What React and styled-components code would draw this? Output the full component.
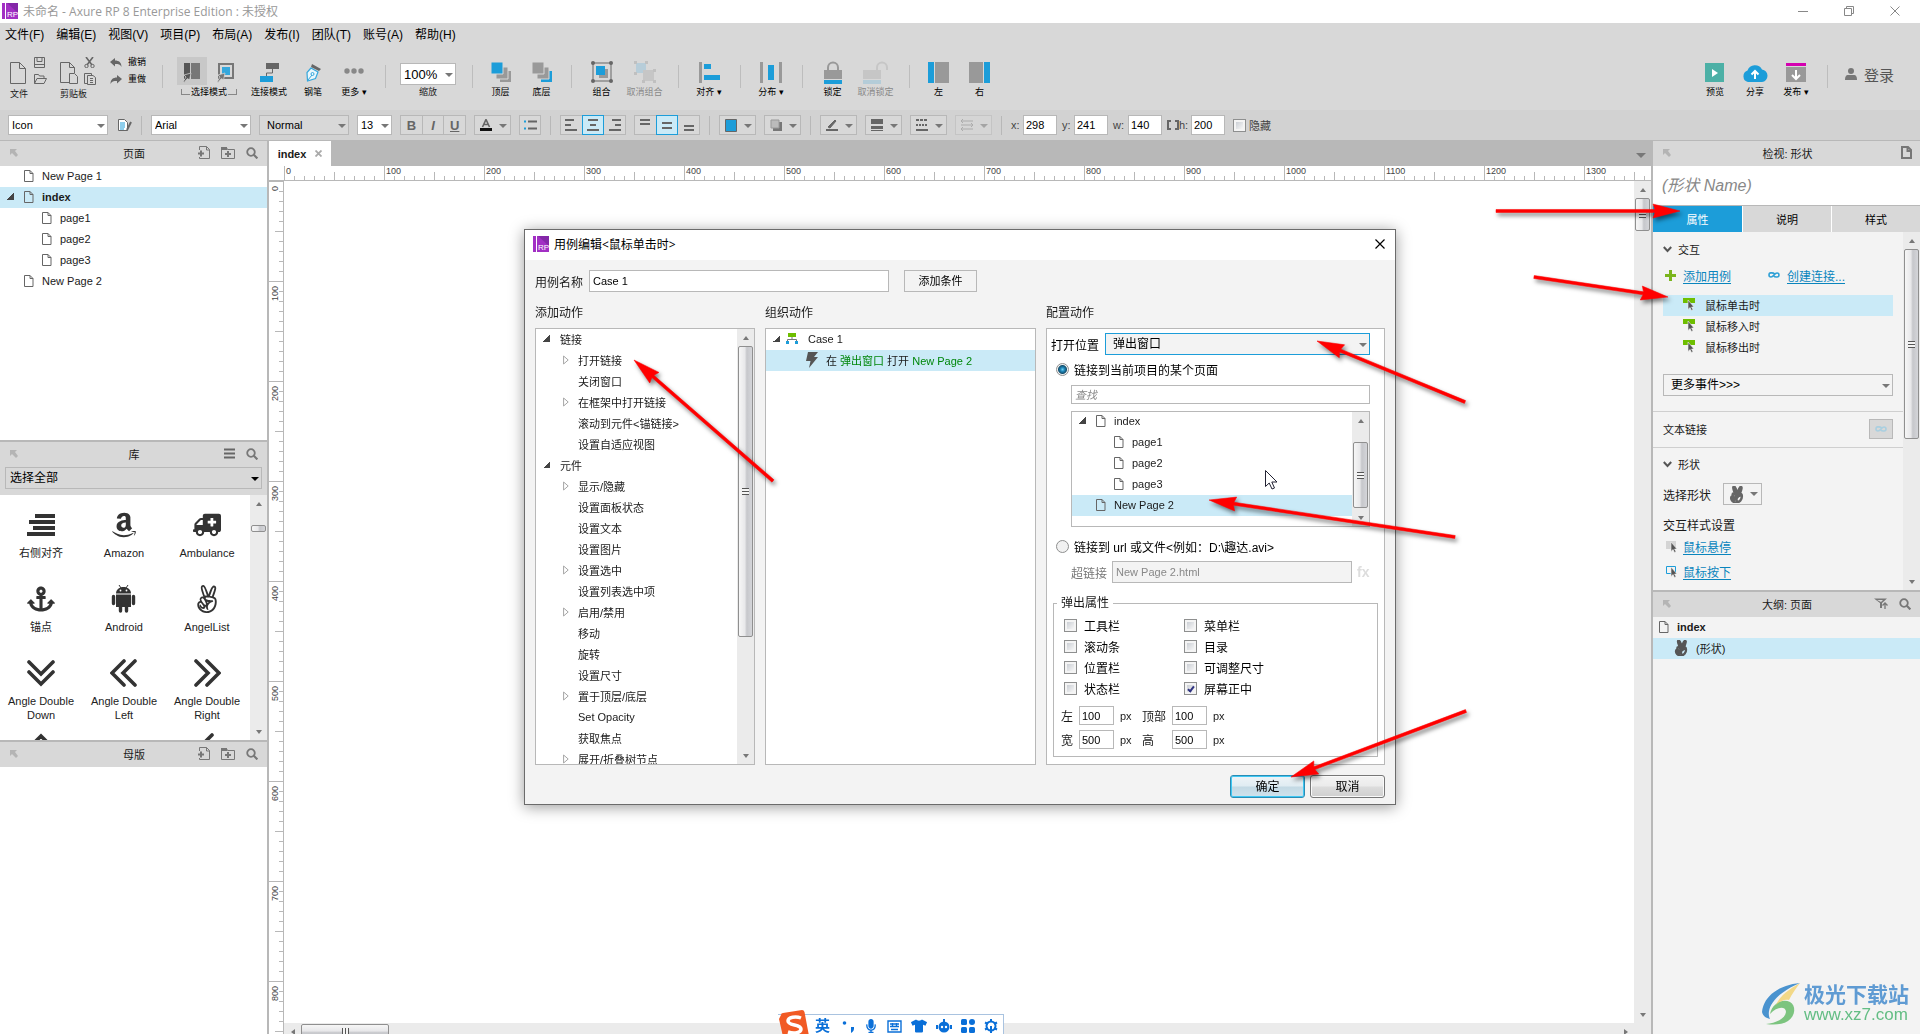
import React from "react";
import styled, { createGlobalStyle, css } from "styled-components";
import { FaAmazon, FaAmbulance, FaAnchor, FaAngellist, FaMicrophone, FaTshirt } from "react-icons/fa";

const C = {
  line: "#b8b8b8",
  bar: "#d8d8d8",
  bar2: "#d2d2d2",
  panel: "#f3f3f3",
  sel: "#caeaf7",
  blue: "#1c9dd9",
  link: "#0a85bd",
  green: "#6ebe00",
};
const SANS = '"Liberation Sans", "Noto Sans CJK SC", sans-serif';

const Global = createGlobalStyle`
  *, *::before, *::after { box-sizing: border-box; }
  body { margin: 0; background: #fff; overflow: hidden; }
  body, button, input, select { font-family: ${SANS}; font-size: 11px; color: #1a1a1a; }
  button { background: none; border: 0; padding: 0; }
  input, select { border-radius: 0; outline: none; margin: 0; }
  svg { display: block; flex: none; }
  ul { list-style: none; margin: 0; padding: 0; }
`;

/* ---------- shared parts ---------- */

const Page = styled.div`
  height: 100vh;
  display: flex;
  flex-direction: column;
`;
const Row = styled.div`
  display: flex;
  align-items: center;
`;
const Grow = styled.div`
  flex: 1;
  min-width: 0;
`;

const SelectWrap = styled.div`
  position: relative;
  width: ${(p) => p.$w || "100%"};
  flex: ${(p) => (p.$w ? "none" : "1")};
  &::after {
    content: "";
    position: absolute;
    right: 3px;
    top: calc(50% - 1px);
    border: 4px solid transparent;
    border-top-color: ${(p) => p.$arrow || "#777"};
    border-bottom: 0;
    pointer-events: none;
  }
`;
const SelectBox = styled.select`
  appearance: none;
  display: block;
  width: 100%;
  height: ${(p) => p.$h || 20}px;
  padding: 0 0 0 ${(p) => p.$pad || 3}px;
  font-size: ${(p) => p.$size || 11}px;
  color: #000;
  border: 1px solid ${(p) => p.$border || C.line};
  background: ${(p) => p.$bg || "#fff"};
`;
function Select({ w, label, value, arrow, ...rest }) {
  return (
    <SelectWrap $w={w} $arrow={arrow}>
      <SelectBox aria-label={label} defaultValue={value} {...rest}>
        <option>{value}</option>
      </SelectBox>
    </SelectWrap>
  );
}

const Bar = styled.div`
  width: 17px;
  flex: none;
  display: flex;
  flex-direction: column;
  align-items: center;
  background: #ebebeb;
  ${(p) => p.$horizontal && css`
    width: auto;
    height: 17px;
    padding-right: 17px;
    flex-direction: row;
  `}
`;
const BarArrow = styled.div`
  width: 17px;
  height: 17px;
  flex: none;
  display: grid;
  place-items: center;
  &::after {
    content: "";
    border: 3px solid transparent;
    border-bottom: 4px solid #777;
    border-top: 0;
    transform: rotate(${(p) => p.$turn || 0}deg);
  }
`;
const Thumb = styled.div`
  width: 15px;
  height: ${(p) => p.$h}px;
  margin-top: ${(p) => p.$at || 0}px;
  flex: none;
  border: 1px solid #8f8f8f;
  border-radius: 2px;
  display: grid;
  place-items: center;
  background: linear-gradient(90deg, #f6f6f6, #e8e8ea 45%, #c6c7cb 60%, #d4d5d9);
  &::after {
    content: "";
    width: 7px;
    height: ${(p) => (p.$h > 20 ? 7 : 0)}px;
    background: repeating-linear-gradient(#555 0 1px, #f4f4f4 1px 3px);
  }
  ${(p) => p.$horizontal && css`
    width: ${p.$h}px;
    height: 15px;
    margin: 0 0 0 ${p.$at || 0}px;
    background: linear-gradient(#f6f6f6, #e8e8ea 45%, #c6c7cb 60%, #d4d5d9);
    &::after {
      width: 7px;
      height: 7px;
      background: repeating-linear-gradient(90deg, #555 0 1px, #f4f4f4 1px 3px);
    }
  `}
`;
function Scrollbar({ at, size }) {
  return (
    <Bar>
      <BarArrow />
      <Thumb $at={at} $h={size} />
      <Grow />
      <BarArrow $turn={180} />
    </Bar>
  );
}

const Check = styled.input.attrs({ type: "checkbox" })`
  appearance: none;
  flex: none;
  width: 13px;
  height: 13px;
  border: 1px solid #8e8f8f;
  background: linear-gradient(135deg, #cbcfd5, #f6f6f6) content-box, #f4f4f4;
  padding: 2px;
  display: grid;
  place-items: center;
  &:checked::after {
    content: "";
    width: 4px;
    height: 7px;
    border: solid #2f3380;
    border-width: 0 2px 2px 0;
    transform: rotate(38deg);
  }
`;
const Radio = styled.input.attrs({ type: "radio" })`
  appearance: none;
  flex: none;
  width: 13px;
  height: 13px;
  border-radius: 50%;
  border: 1px solid #8e8f8f;
  background: #f1f1f1;
  &:checked {
    background: radial-gradient(circle at 50% 50%, #6fd0f2 0, #1f86b8 2px, #15506f 4px, #f1f1f1 5px);
  }
`;

/* ---------- icons ---------- */

const I = ({ w, h, children, ...rest }) => (
  <svg width={w} height={h} viewBox={`0 0 ${w} ${h}`} fill="none" aria-hidden="true" {...rest}>{children}</svg>
);
const Logo = () => (
  <I w={16} h={16}>
    <path d="M0 0h16v16H0z" fill="#a22fc4" />
    <path d="M5 0h11v10z" fill="#8427a8" />
    <path d="M3.500 0v16" stroke="#fff" />
    <text x="5" y="14" fontSize="8" fill="#fff" fontFamily="Liberation Sans">RP</text>
  </I>
);
const PageIcon = () => (
  <I w={10} h={12}>
    <path d="M.5.5h5.500l3 3v8H.5zM6 .5v3h3" stroke="#666" />
  </I>
);
const PinIcon = () => (
  <I w={8} h={8}>
    <path d="M0 0h7L5 2l3 4-2 2-4-4-2 2z" fill="#b4b4b4" />
  </I>
);
const SearchIcon = () => (
  <I w={12} h={12}>
    <circle cx="5" cy="5" r="3.800" stroke="#777" strokeWidth="1.800" />
    <path d="M7.800 7.800l3.600 3.600" stroke="#777" strokeWidth="2.200" />
  </I>
);
const AddPageIcon = () => (
  <I w={12} h={13}>
    <path d="M1.500 4V.5h7l3 3v9h-10V11M8.500.5V4h3" stroke="#777" />
    <path d="M0 7.500h6M3 4.500v6" stroke="#777" strokeWidth="2" />
  </I>
);
const AddFolderIcon = () => (
  <I w={14} h={12}>
    <path d="M.5 11.500v-11h5l1 2h7v9z" stroke="#777" />
    <path d="M0 0h6v3H0z" fill="#777" />
    <path d="M4 7h6M7 4v6" stroke="#777" strokeWidth="2" />
  </I>
);
const MenuIcon = () => (
  <I w={11} h={11}><path d="M0 1.500h11M0 5.500h11M0 9.500h11" stroke="#666" strokeWidth="2" /></I>
);
const FilterIcon = () => (
  <I w={14} h={11}>
    <path d="M0 .5h13L8 5v5H6V5z" fill="#777" />
    <path d="M3 2h6L7 4z" fill="#d8d8d8" />
    <path d="M11 11V5M8.500 7.500L11 5l2.500 2.500" stroke="#777" strokeWidth="1.300" />
  </I>
);
const PointerIcon = ({ kind }) => (
  <I w={12} h={13}>
    {kind === "event" && <path d="M0 0h12v5H0z" fill={C.green} />}
    {kind === "hover" && <path d="M0 1h10v8H0z" fill="#d4d4d4" />}
    {kind === "press" && <path d="M.5 1.500h9v7h-9z" stroke={C.blue} />}
    <path d="M5 2v9.500l2-2 1.500 3 1.500-.8L8.600 9H11z" fill="#555" stroke="#f3f3f3" strokeWidth=".6" />
  </I>
);
const ChainIcon = ({ color = "#2fa0d6" }) => (
  <I w={12} h={6}>
    <path d="M6.500 1.800C5.600.8 4 .8 2.800.9 1.600 1 1 2 1 3s.8 2 2 2c2.500 0 3.500-4 6-4 1.200 0 2 1 2 2s-.8 2-2 2C7.800 5.100 6.500 5 5.800 4" stroke={color} strokeWidth="1.600" />
  </I>
);
const Chevron = () => (
  <I w={9} h={7}><path d="M.8 1l3.700 4L8.200 1" stroke="#555" strokeWidth="2" /></I>
);

const fileIcon = <I w={16} h={22}><path d="M.5.5h9l6 6v15H.5zM9.500.5v6h6" stroke="#666" /></I>;
const saveIcon = <I w={11} h={11}><path d="M.5.500h10v10H.5zM3 .5v4h5v-4M0 7.500h11" stroke="#666" /></I>;
const openIcon = <I w={13} h={10}><path d="M.5 9.500V.5h4l1 1.500H10v2.500H3l-2.500 5H10l2.500-5H10" stroke="#666" /></I>;
const cutIcon = <I w={11} h={11}><path d="M2 0l6 8M9 0L3 8" stroke="#666" strokeWidth="1.600" /><circle cx="2.500" cy="9" r="1.700" stroke="#666" /><circle cx="8.500" cy="9" r="1.700" stroke="#666" /></I>;
const clipIcon = <I w={18} h={22}><path d="M9 20.500H.5V.5h9l5 5V11M9.500.5v5h5" stroke="#666" /><path d="M9.500 11.500h5l3 3v7h-8z" stroke="#666" /></I>;
const pasteIcon = <I w={12} h={12}><path d="M3 10.500H.5V.5h7V2" stroke="#666" /><path d="M3.500 2.500h5.500l2.500 2v7h-8zM6 5.500h3M6 7.500h3M6 9.500h3" stroke="#666" /></I>;
const undoIcon = <I w={12} h={10}><path d="M0 4l5-4v2.500c4 0 6.500 2 6.500 6.500C10.500 6.500 8.500 6 5 6v2.500z" fill="#666" /></I>;
const redoIcon = <I w={12} h={10}><path d="M12 4L7 0v2.500C3 2.500.5 4.500.5 9 1.500 6.500 3.500 6 7 6v2.500z" fill="#666" /></I>;
const modeA = <I w={17} h={20}><path d="M1 0h6v16H1z" fill="#555" /><path d="M8 0h9v16H8z" fill="#777" /><path d="M0 19l3-5-2-2 7-2-1.500 7-2-1.500-3.500 4z" fill="#555" stroke="#ddd" strokeWidth=".7" /></I>;
const modeB = <I w={17} h={20}><path d="M2 1h14v14H2z" stroke="#777" strokeWidth="2" fill="#d8d8d8" /><path d="M5 4h8v8H5z" fill="#35a7dc" /><path d="M0 19l3-5-2-2 7-2-1.500 7-2-1.500-3.500 4z" fill="#777" stroke="#ddd" strokeWidth=".7" /></I>;
const connectIcon = <I w={19} h={19}><path d="M6 0h13v6H6z" fill="#666" /><path d="M12.500 6v4h-6v3" stroke="#666" /><path d="M0 13h13v6H0z" fill={C.blue} /></I>;
const penIcon = <I w={15} h={19}><path d="M6 1l9 5-2 2-8-4z" fill="#666" /><path d="M5 5L1 9.500 1.500 18l8-2.500L12 9z" fill="#eaf7fc" stroke="#35a7dc" strokeWidth="1.200" /><path d="M2 17l4-5" stroke="#35a7dc" /><circle cx="6.500" cy="11" r="1.500" stroke="#35a7dc" /></I>;
const moreIcon = <I w={20} h={22}><g fill="#888"><circle cx="3" cy="10" r="2.700" /><circle cx="10" cy="10" r="2.700" /><circle cx="17" cy="10" r="2.700" /></g></I>;
const frontIcon = <I w={20} h={20}><path d="M9 9h11v11H9z" fill="#999" /><path d="M5 5h12v12H5z" fill="#999" stroke="#d8d8d8" /><path d="M0 0h12v12H0z" fill={C.blue} stroke="#d8d8d8" /></I>;
const backIcon = <I w={20} h={20}><path d="M9 9h11v11H9z" fill={C.blue} /><path d="M5 5h12v12H5z" fill="#999" stroke="#d8d8d8" /><path d="M0 0h12v12H0z" fill="#999" stroke="#d8d8d8" /></I>;
const groupIcon = <I w={22} h={22}><path d="M2 2h18v18H2z" stroke="#666" /><g fill="#666"><circle cx="2" cy="2" r="2" /><circle cx="20" cy="2" r="2" /><circle cx="2" cy="20" r="2" /><circle cx="20" cy="20" r="2" /></g><path d="M8 8h9v9H8z" fill="#999" /><path d="M5 5h9v9H5z" fill={C.blue} /></I>;
const ungroupIcon = <I w={22} h={22}><path d="M2 2h10v10H2z" fill="#b7cdd9" /><path d="M9 9h11v11H9z" fill="#c6c6c6" /><g fill="#c0c0c0"><path d="M0 0h3v3H0zM11 0h3v3h-3zM0 11h3v3H0zM19 8h3v3h-3zM8 19h3v3H8zM19 19h3v3h-3z" /></g></I>;
const alignIcon = <I w={21} h={21}><path d="M0 0h3v21H0z" fill="#999" /><path d="M5 2h7v5H5zM5 13h16v5H5z" fill={C.blue} /></I>;
const distIcon = <I w={22} h={21}><path d="M0 0h3v21H0zM19 0h3v21h-3z" fill="#999" /><path d="M8 3h6v15H8z" fill={C.blue} /></I>;
const lockIcon = <I w={18} h={23}><path d="M4 9V6.500a5 5 0 0110 0V9" stroke="#999" strokeWidth="2" /><path d="M0 9h18v9H0z" fill="#999" /><path d="M0 19h18v4H0z" fill={C.blue} /></I>;
const unlockIcon = <I w={26} h={23}><path d="M14 9V6.500a5 5 0 0110 0V9" stroke="#c6c6c6" strokeWidth="2" /><path d="M0 9h18v9H0z" fill="#c6c6c6" /><path d="M0 19h18v4H0z" fill="#b4ccd8" /></I>;
const leftIcon = <I w={21} h={21}><path d="M0 0h6v21H0z" fill={C.blue} /><path d="M7 0h14v21H7z" fill="#999" /></I>;
const rightIcon = <I w={21} h={21}><path d="M15 0h6v21h-6z" fill={C.blue} /><path d="M0 0h14v21H0z" fill="#999" /></I>;
const previewIcon = <I w={19} h={19}><path d="M0 0h19v19H0z" fill="#4cb0a6" /><path d="M7 6l6 4-6 4z" fill="#fff" /></I>;
const shareIcon = <I w={26} h={19}><path d="M6 19a6 6 0 01-.5-11.500 8 8 0 0114.500-1A6.300 6.300 0 0120 19z" fill={C.blue} /><path d="M13 16V8.500M9.500 11.500L13 8l3.500 3.500" stroke="#fff" strokeWidth="2" /></I>;
const publishIcon = <I w={20} h={19}><path d="M0 0h20v3H0z" fill="#d400b0" /><path d="M0 4h20v15H0z" fill="#999" /><path d="M10 7v9M6 12l4 4 4-4" stroke="#fff" strokeWidth="2" /></I>;
const userIcon = <I w={12} h={12}><circle cx="6" cy="3" r="3" fill="#777" /><path d="M0 12c0-4 1.500-5 3-5h6c1.500 0 3 1 3 5z" fill="#777" /></I>;

/* ---------- window title and menu ---------- */

const TitleBar = styled.header`
  height: 23px;
  flex: none;
  display: flex;
  align-items: center;
  gap: 5px;
  padding: 0 20px 1px 2px;
  color: #999;
  font: 12px "Open Sans", "Noto Sans CJK SC", sans-serif;
`;
const WinButtons = styled.div`
  display: flex;
  gap: 36px;
  margin-left: auto;
  button { width: 10px; height: 10px; }
`;
const Menu = styled.nav`
  height: 24px;
  flex: none;
  display: flex;
  align-items: center;
  gap: 12px;
  padding: 0 0 3px 5px;
  background: ${C.bar};
  button { font-size: 12px; color: #000; }
`;

/* ---------- toolbar ---------- */

const ToolbarBox = styled.div`
  height: 63px;
  flex: none;
  display: flex;
  align-items: flex-start;
  padding: 7px 26px 0 10px;
  background: ${C.bar};
`;
const Tool = styled.button`
  width: ${(p) => p.$w}px;
  flex: none;
  display: flex;
  flex-direction: column;
  align-items: center;
  font-size: 9px;
  line-height: 14px;
  white-space: nowrap;
  color: ${(p) => (p.$off ? "#888" : "#000")};
`;
const ToolIcon = styled.span`
  height: 31px;
  display: flex;
  align-items: center;
  padding-top: 5px;
`;
const ToolSep = styled.div`
  width: 1px;
  height: 23px;
  flex: none;
  margin: 11px ${(p) => p.$r || 8}px 0 ${(p) => p.$l || 9}px;
  background: #bdbdbd;
`;
const FileTools = styled.div`
  width: 50px;
  flex: none;
  display: grid;
  grid-template-columns: 24px auto;
  grid-template-rows: 16px 18px 12px;
  align-items: center;
  justify-content: start;
  font-size: 9px;
  line-height: 12px;
  & > :first-child { grid-row: span 2; padding-top: 4px; }
  & > :last-child { grid-column: span 2; }
`;
const UndoTools = styled.div`
  width: 51px;
  flex: none;
  display: flex;
  flex-direction: column;
  align-items: flex-start;
  button { display: flex; align-items: center; gap: 6px; font-size: 9px; height: 17px; line-height: 17px; color: #000; }
`;
const ModeGroup = styled.div`
  width: 84px;
  flex: none;
  padding-top: 3px;
  display: grid;
  grid-template-columns: 30px 30px;
  column-gap: 4px;
  justify-content: center;
`;
const ModeButton = styled.button`
  height: 28px;
  display: grid;
  place-items: center;
  padding: 4px 2px 0 0;
  background: ${(p) => (p.$on ? "#c8c8c8" : "none")};
`;
const ModeLabel = styled.div`
  grid-column: span 2;
  display: flex;
  align-items: center;
  justify-content: center;
  font-size: 9px;
  line-height: 14px;
  color: #000;
  gap: 1px;
  &::before, &::after { content: ""; width: 9px; height: 6px; border: solid #888; border-width: 0 0 1px 1px; }
  &::after { border-width: 0 1px 1px 0; }
`;
const ZoomBox = styled.div`
  width: 56px;
  padding-top: 9px;
  display: flex;
  flex-direction: column;
  flex: none;
  text-align: center;
  font-size: 9px;
  line-height: 14px;
`;
const User = styled.button`
  display: flex;
  align-items: center;
  gap: 7px;
  height: 40px;
  font-size: 15px;
  color: #555;
`;

function T({ w, icon, off, children }) {
  return <Tool $w={w} $off={off}><ToolIcon>{icon}</ToolIcon>{children}</Tool>;
}

function Toolbar() {
  return (
    <ToolbarBox>
      <FileTools><span>{fileIcon}</span>{saveIcon}{openIcon}<span>文件</span></FileTools>
      <FileTools><span>{clipIcon}</span>{cutIcon}{pasteIcon}<span>剪贴板</span></FileTools>
      <UndoTools><button>{undoIcon}撤销</button><button>{redoIcon}重做</button></UndoTools>
      <ToolSep $l={1} $r={4} />
      <ModeGroup>
        <ModeButton $on aria-label="相交选中">{modeA}</ModeButton>
        <ModeButton aria-label="包含选中">{modeB}</ModeButton>
        <ModeLabel>选择模式</ModeLabel>
      </ModeGroup>
      <T w={36} icon={connectIcon}>连接模式</T>
      <T w={52} icon={penIcon}>钢笔</T>
      <T w={30} icon={moreIcon}>更多 ▾</T>
      <ToolSep $l={16} $r={14} />
      <ZoomBox>
        <Row><Select label="缩放" value="100%" $h={22} $size={13} w="56px" /></Row>
        缩放
      </ZoomBox>
      <ToolSep $l={16} $r={7} />
      <T w={41} icon={frontIcon}>顶层</T>
      <T w={41} icon={backIcon}>底层</T>
      <ToolSep />
      <T w={43} icon={groupIcon}>组合</T>
      <T w={43} icon={ungroupIcon} off>取消组合</T>
      <ToolSep $l={12} />
      <T w={44} icon={alignIcon}>对齐 ▾</T>
      <ToolSep />
      <T w={44} icon={distIcon}>分布 ▾</T>
      <ToolSep />
      <T w={43} icon={lockIcon}>锁定</T>
      <T w={43} icon={unlockIcon} off>取消锁定</T>
      <ToolSep $l={12} />
      <T w={41} icon={leftIcon}>左</T>
      <T w={41} icon={rightIcon}>右</T>
      <Grow />
      <T w={40} icon={previewIcon}>预览</T>
      <T w={40} icon={shareIcon}>分享</T>
      <T w={42} icon={publishIcon}>发布 ▾</T>
      <ToolSep $l={10} $r={17} />
      <User>{userIcon}登录</User>
    </ToolbarBox>
  );
}

/* ---------- format bar ---------- */

const FormatBox = styled.div`
  height: 31px;
  flex: none;
  display: flex;
  align-items: center;
  gap: 8px;
  padding-left: 8px;
  background: ${C.bar2};
  border-bottom: 1px solid ${C.line};
`;
const Sep = styled.div`
  width: 1px;
  height: 19px;
  margin: 0 1px;
  background: ${C.line};
`;
const StyleButton = styled.button`
  padding: 0 0 0 2px;
`;
const Cells = styled.div`
  width: 66px;
  display: flex;
  button { flex: 1; }
  button + button { margin-left: -1px; }
`;
const Cell = styled.button`
  width: ${(p) => (p.$drop ? 37 : 22)}px;
  height: 20px;
  display: flex;
  align-items: center;
  justify-content: ${(p) => (p.$drop ? "space-between" : "center")};
  padding: ${(p) => (p.$drop ? "0 3px 0 5px" : 0)};
  border: 1px solid ${(p) => (p.$on ? C.blue : C.line)};
  background: ${(p) => (p.$on ? C.sel : C.bar)};
  z-index: ${(p) => (p.$on ? 1 : 0)};
  opacity: ${(p) => (p.$off ? 0.5 : 1)};
  color: #666;
  font-size: 13px;
  font-weight: bold;
  ${(p) => p.$drop && css`
    &::after { content: ""; border: 4px solid transparent; border-top-color: #777; border-bottom: 0; margin-top: 1px; }
  `}
`;
const Fields = styled.div`
  display: flex;
  align-items: center;
  gap: 5px;
`;
const Field = styled.label`
  display: flex;
  align-items: center;
  gap: 3px;
  font-size: 11px;
  color: #444;
  span { width: ${(p) => p.$w || 9}px; }
`;
const NumInput = styled.input`
  width: ${(p) => p.$w || 34}px;
  height: ${(p) => p.$h || 20}px;
  padding: 0 2px;
  border: 1px solid ${C.line};
  background: #fff;
  color: #000;
`;
const lines = (d, w = 12, h = 12) => <I w={w} h={h}><path d={d} stroke="#666" strokeWidth="2" /></I>;

function FormatBar() {
  return (
    <FormatBox>
      <Select w="100px" label="样式" value="Icon" />
      <StyleButton aria-label="样式管理">
        <I w={14} h={12}>
          <path d="M.5.5h6l3 3v8h-9z" fill="#fff" stroke="#666" />
          <path d="M2 4h5M2 6h5M2 8h5M2 10h4" stroke={C.blue} />
          <path d="M13 3l-4 8" stroke="#666" strokeWidth="2" />
        </I>
      </StyleButton>
      <Sep />
      <Select w="100px" label="字体" value="Arial" />
      <Select w="90px" label="字形" value="Normal" $bg={C.bar} $pad={7} />
      <Select w="35px" label="字号" value="13" />
      <Cells><Cell>B</Cell><Cell><i>I</i></Cell><Cell><u>U</u></Cell></Cells>
      <Cell $drop aria-label="文字颜色">
        <I w={12} h={12}><path d="M2.500 8L6 0.500 9.500 8M4 5.500h4" stroke="#666" strokeWidth="1.600" /><path d="M0 9h12v3H0z" fill="#111" /></I>
      </Cell>
      <Cell aria-label="项目符号">
        <I w={13} h={10}><path d="M0 1.500h2M0 8.500h2" stroke={C.blue} strokeWidth="2" /><path d="M4 1.500h9M4 8.500h9" stroke="#666" strokeWidth="2" /></I>
      </Cell>
      <Sep />
      <Cells>
        <Cell aria-label="左对齐">{lines("M0 1h9M0 6h6M0 11h12")}</Cell>
        <Cell $on aria-label="居中">{lines("M1 1h10M3 6h6M0 11h12")}</Cell>
        <Cell aria-label="右对齐">{lines("M3 1h9M6 6h6M0 11h12")}</Cell>
      </Cells>
      <Cells>
        <Cell aria-label="顶部">{lines("M1 1h10M1 5h10")}</Cell>
        <Cell $on aria-label="中部">{lines("M1 4h10M1 9h10")}</Cell>
        <Cell aria-label="底部">{lines("M1 7h10M1 11h10")}</Cell>
      </Cells>
      <Sep />
      <Cell $drop aria-label="填充"><I w={12} h={13}><path d="M.5.5h11v12H.5z" fill={C.blue} stroke="#666" /></I></Cell>
      <Cell $drop aria-label="阴影"><I w={12} h={12}><path d="M3 3h9v9H3z" fill="#777" /><path d="M1 1h8v8H1z" fill="#bbb" stroke="#999" /></I></Cell>
      <Sep />
      <Cell $drop aria-label="线条颜色"><I w={12} h={12}><path d="M2 8l7-7 1 1-6 7z" fill="#666" stroke="#666" /><path d="M0 11h12" stroke="#666" strokeWidth="2" /></I></Cell>
      <Cell $drop aria-label="线宽"><I w={12} h={12}><path d="M0 0h12v5H0zM0 7h12v3H0zM0 11h12v1H0z" fill="#666" /></I></Cell>
      <Cell $drop aria-label="线型"><I w={12} h={12}><path d="M0 1h12" stroke="#666" strokeWidth="2" strokeDasharray="3 1" /><path d="M0 6h12" stroke="#666" strokeWidth="2" strokeDasharray="2 1" /><path d="M0 11h12" stroke="#666" strokeWidth="2" /></I></Cell>
      <Cell $drop $off aria-label="箭头"><I w={12} h={12}><path d="M0 2h12M0 6h12M0 10h12M2 0L0 2l2 2M10 4l2 2-2 2M2 8l-2 2 2 2" stroke="#888" /></I></Cell>
      <Sep />
      <Fields>
        <Field><span>x:</span><NumInput defaultValue="298" /></Field>
        <Field><span>y:</span><NumInput defaultValue="241" /></Field>
        <Field $w={12}><span>w:</span><NumInput defaultValue="140" /></Field>
        <Row>
          <I w={12} h={10}><path d="M4 1H1v8h3M8 1h3v8H8" stroke="#666" strokeWidth="2" /></I>
          <Field><span>h:</span><NumInput defaultValue="200" /></Field>
        </Row>
      </Fields>
      <Field><Check />隐藏</Field>
    </FormatBox>
  );
}

/* ---------- side panels ---------- */

const Main = styled.div`
  flex: 1;
  min-height: 0;
  display: grid;
  grid-template-columns: 269px minmax(0, 1fr) 269px;
`;
const Side = styled.aside`
  min-height: 0;
  display: flex;
  flex-direction: column;
  background: ${(p) => (p.$right ? C.panel : "#fff")};
  border: solid ${C.line};
  border-width: ${(p) => (p.$right ? "0 0 0 2px" : "0 2px 0 0")};
`;
const HeadBox = styled.div`
  height: 25px;
  flex: none;
  display: grid;
  grid-template-columns: 1fr auto 1fr;
  align-items: center;
  padding: 0 ${(p) => p.$r || 9}px 2px 10px;
  background: ${C.bar};
  font-size: 11px;
`;
const HeadIcons = styled.div`
  display: flex;
  align-items: center;
  justify-content: flex-end;
  gap: 11px;
`;
function Head({ title, children, r }) {
  return <HeadBox $r={r}><PinIcon /><span>{title}</span><HeadIcons>{children}</HeadIcons></HeadBox>;
}
const Block = styled.section`
  display: flex;
  flex-direction: column;
  flex: ${(p) => (p.$h ? "none" : "1")};
  height: ${(p) => (p.$h ? `${p.$h}px` : "auto")};
  min-height: 0;
  overflow: hidden;
  border-bottom: ${(p) => (p.$h ? 2 : 0)}px solid ${C.line};
`;
const Item = styled.li`
  height: 21px;
  display: flex;
  align-items: center;
  gap: ${(p) => p.$gap || 8}px;
  padding: 0 0 2px ${(p) => p.$in}px;
  white-space: nowrap;
  font-weight: ${(p) => (p.$bold ? "bold" : "normal")};
  background: ${(p) => (p.$on ? C.sel : "none")};
`;
const Twist = styled.i`
  width: 7px;
  height: 7px;
  flex: none;
  margin-right: ${(p) => p.$r || 0}px;
  background: linear-gradient(135deg, transparent 50%, #444 50%);
`;
const LibHead = styled.div`
  padding: 0 5px 6px;
  background: ${C.bar};
  display: flex;
`;
const LibBody = styled.div`
  flex: 1;
  min-height: 0;
  display: flex;
`;
const LibGrid = styled.div`
  flex: 1;
  display: grid;
  grid-template-columns: repeat(3, 83px);
  grid-auto-rows: 74px;
  overflow: hidden;
`;
const LibItem = styled.div`
  display: flex;
  flex-direction: column;
  align-items: center;
  text-align: center;
  padding: 16px 4px 0 3px;
  line-height: 14px;
  color: #222;
  svg { margin-bottom: 7px; }
`;
const Flip = styled.span`
  svg { transform: scaleX(-1); }
`;

const K = "#333";
const libIcons = [
  [<I w={28} h={28}><path d="M8 3h20v4H8zM2 9h26v4H2zM6 15h22v4H6zM0 21h28v4H0z" fill={K} /></I>, "右侧对齐"],
  [<FaAmazon size={28} color={K} />, "Amazon"],
  [<Flip><FaAmbulance size={28} color={K} /></Flip>, "Ambulance"],
  [<FaAnchor size={28} color={K} />, "锚点"],
  [<I w={28} h={28} fill={K}>
    <path d="M6 8.500C6 4.500 9.500 2 13.500 2S21 4.500 21 8.500z" fill={K} />
    <path d="M9 0l2 3M18 0l-2 3" stroke={K} />
    <circle cx="10.500" cy="5.500" r=".9" fill="#fff" /><circle cx="16.500" cy="5.500" r=".9" fill="#fff" />
    <path d="M6 9.500h15V22H6z" fill={K} />
    <path d="M3.500 11.500v7M23.500 11.500v7M10.500 20v6M16.500 20v6" stroke={K} strokeWidth="3.400" strokeLinecap="round" />
  </I>, "Android"],
  [<FaAngellist size={28} color={K} />, "AngelList"],
  [<I w={28} h={28}><path d="M2 3l12 12L26 3M2 13l12 12 12-12" stroke={K} strokeWidth="3.600" strokeLinecap="round" /></I>, "Angle Double Down"],
  [<I w={28} h={28}><path d="M14 2L2 14l12 12M25 2L13 14l12 12" stroke={K} strokeWidth="3.600" strokeLinecap="round" /></I>, "Angle Double Left"],
  [<I w={28} h={28}><path d="M3 2l12 12L3 26M14 2l12 12-12 12" stroke={K} strokeWidth="3.600" strokeLinecap="round" /></I>, "Angle Double Right"],
  [<I w={28} h={28}><path d="M2 15L14 3l12 12M2 25l12-12 12 12" stroke={K} strokeWidth="3.600" strokeLinecap="round" /></I>, ""],
  [<I w={28} h={28}><path d="M2 12l12 12 12-12" stroke={K} strokeWidth="3.600" strokeLinecap="round" /></I>, ""],
  [<I w={28} h={28}><path d="M19 2L7 14l12 12" stroke={K} strokeWidth="3.600" strokeLinecap="round" /></I>, ""],
];

function LeftPanel() {
  return (
    <Side>
      <Block $h={301}>
        <Head title="页面"><AddPageIcon /><AddFolderIcon /><SearchIcon /></Head>
        <ul>
          <Item $in={24}><PageIcon />New Page 1</Item>
          <Item $in={7} $on $bold><Twist $r={2} /><PageIcon />index</Item>
          <Item $in={42}><PageIcon />page1</Item>
          <Item $in={42}><PageIcon />page2</Item>
          <Item $in={42}><PageIcon />page3</Item>
          <Item $in={24}><PageIcon />New Page 2</Item>
        </ul>
      </Block>
      <Block $h={300}>
        <Head title="库"><MenuIcon /><SearchIcon /></Head>
        <LibHead><Select label="库" value="选择全部" $h={22} $size={12} $pad={4} $bg={C.bar} arrow="#000" /></LibHead>
        <LibBody>
          <LibGrid>{libIcons.map(([icon, name], i) => <LibItem key={i}>{icon}{name}</LibItem>)}</LibGrid>
          <Scrollbar at={13} size={7} />
        </LibBody>
      </Block>
      <Block>
        <Head title="母版"><AddPageIcon /><AddFolderIcon /><SearchIcon /></Head>
      </Block>
    </Side>
  );
}

const NameInput = styled.input`
  height: 40px;
  flex: none;
  padding: 0 9px;
  border: solid ${C.line};
  border-width: 0 0 1px;
  font-size: 16px;
  font-style: italic;
  &::placeholder { color: #888; opacity: 1; }
`;
const Tabs = styled.div`
  display: grid;
  grid-template-columns: 89px 1fr 1fr;
  gap: 1px;
  flex: none;
  height: 26px;
  background: #fff;
`;
const InsTab = styled.button`
  background: ${(p) => (p.$on ? C.blue : C.bar)};
  color: ${(p) => (p.$on ? "#fff" : "#000")};
`;
const InsBody = styled.div`
  height: 360px;
  flex: none;
  display: flex;
  border-bottom: 2px solid ${C.line};
`;
const InsGroup = styled.div`
  padding: ${(p) => p.$pad};
  border-bottom: ${(p) => (p.$last ? 0 : 1)}px solid #cfcfcf;
`;
const InsRow = styled(Row)`
  height: ${(p) => p.$h || 20}px;
  margin-top: ${(p) => p.$t || 0}px;
  gap: ${(p) => p.$gap || 6}px;
  padding: 0 ${(p) => p.$r || 0}px ${(p) => (p.$flat ? 0 : 2)}px ${(p) => p.$in || 0}px;
  font-size: ${(p) => p.$size || 12}px;
`;
const Link = styled.a`
  color: ${C.link};
  font-size: 12px;
  text-underline-offset: 2px;
`;
const Square = styled.button`
  width: 24px;
  height: 20px;
  margin-left: auto;
  display: grid;
  place-items: center;
  border: 1px solid ${C.line};
  background: ${C.bar};
`;
const ShapePick = styled.button`
  width: 39px;
  height: 22px;
  margin-left: 6px;
  display: flex;
  align-items: center;
  justify-content: space-between;
  padding: 0 3px 0 4px;
  color: #666;
  border: 1px solid ${C.line};
  &::after { content: ""; border: 4px solid transparent; border-top-color: #777; border-bottom: 0; }
`;
const Events = styled.ul`
  margin: 9px 0 16px;
`;

function RightPanel() {
  return (
    <Side $right>
      <Head title="检视: 形状" r={8}>
        <I w={11} h={13}><path d="M1 1h6l3 3v8H1zM6.500 1v4H10" stroke="#777" strokeWidth="2" /></I>
      </Head>
      <NameInput placeholder="(形状 Name)" aria-label="形状名称" />
      <Tabs><InsTab $on>属性</InsTab><InsTab>说明</InsTab><InsTab>样式</InsTab></Tabs>
      <InsBody>
        <Grow>
          <InsGroup $pad="8px 10px 15px">
            <InsRow $size={11}><Chevron />交互</InsRow>
            <InsRow $t={6} $in={2} $r={48} $gap={7}>
              <I w={11} h={11}><path d="M5.500 0v11M0 5.500h11" stroke="#7ab51d" strokeWidth="3" /></I>
              <Link href="#case">添加用例</Link>
              <Grow />
              <ChainIcon /><Link href="#link">创建连接...</Link>
            </InsRow>
            <Events>
              {["鼠标单击时", "鼠标移入时", "鼠标移出时"].map((t, i) => (
                <Item key={t} $in={20} $gap={10} $on={i === 0}><PointerIcon kind="event" />{t}</Item>
              ))}
            </Events>
            <Row><Select label="更多事件" value="更多事件>>>" $h={22} $size={12} $pad={7} $bg={C.panel} /></Row>
          </InsGroup>
          <InsGroup $pad="0 10px">
            <InsRow $h={35} $size={11}>文本链接<Square aria-label="文本链接"><ChainIcon color="#aacfe0" /></Square></InsRow>
          </InsGroup>
          <InsGroup $pad="7px 10px 0" $last>
            <InsRow $size={11}><Chevron />形状</InsRow>
            <InsRow $t={8} $h={22} $flat>选择形状<ShapePick aria-label="选择形状"><FaAngellist size={17} stroke="#666" strokeWidth="40" /></ShapePick></InsRow>
            <InsRow $t={10}>交互样式设置</InsRow>
            <InsRow $t={2} $in={3} $gap={5}><PointerIcon kind="hover" /><Link href="#hover">鼠标悬停</Link></InsRow>
            <InsRow $t={5} $in={3} $gap={5}><PointerIcon kind="press" /><Link href="#press">鼠标按下</Link></InsRow>
          </InsGroup>
        </Grow>
        <Scrollbar at={0} size={190} />
      </InsBody>
      <Head title="大纲: 页面"><FilterIcon /><SearchIcon /></Head>
      <ul>
        <Item $in={6} $bold><PageIcon />index</Item>
        <Item $in={20} $on $gap={7}><FaAngellist size={16} color="#555" stroke="#555" strokeWidth="40" />(形状)</Item>
      </ul>
    </Side>
  );
}

/* ---------- canvas ---------- */

const Center = styled.main`
  min-width: 0;
  min-height: 0;
  display: flex;
  flex-direction: column;
  overflow: hidden;
`;
const TabBar = styled.div`
  height: 25px;
  flex: none;
  display: flex;
  align-items: center;
  justify-content: space-between;
  padding-right: 5px;
  background: ${C.line};
  &::after { content: ""; border: 5px solid transparent; border-top-color: #777; border-bottom: 0; margin-top: 4px; }
`;
const DocTab = styled.button`
  height: 25px;
  width: 62px;
  display: flex;
  align-items: center;
  justify-content: center;
  gap: 9px;
  font-weight: bold;
  background: #fff;
`;
const HRuler = styled.div`
  height: 15px;
  flex: none;
  display: flex;
  overflow: hidden;
  padding-left: 15px;
  border-bottom: 1px solid ${C.line};
  font-size: 9px;
  line-height: 11px;
  color: #444;
  span {
    width: 100px;
    flex: none;
    padding-left: 1px;
    border-left: 1px solid ${C.line};
    background:
      linear-gradient(${C.line}, ${C.line}) 49px 100% / 1px 8px no-repeat,
      repeating-linear-gradient(90deg, transparent 0 9px, ${C.line} 9px 10px) 0 100% / 100% 4px no-repeat;
  }
`;
const CanvasRow = styled.div`
  flex: 1;
  min-height: 0;
  display: flex;
`;
const VRuler = styled.div`
  width: 15px;
  flex: none;
  overflow: hidden;
  border-right: 1px solid ${C.line};
  font-size: 9px;
  line-height: 10px;
  color: #444;
  div {
    height: 100px;
    padding: 4px 0 0 1px;
    border-top: 1px solid ${C.line};
    background:
      linear-gradient(${C.line}, ${C.line}) 100% 49px / 8px 1px no-repeat,
      repeating-linear-gradient(transparent 0 9px, ${C.line} 9px 10px) 100% 0 / 4px 100% no-repeat;
  }
  span { display: block; writing-mode: vertical-rl; transform: rotate(180deg); width: 10px; }
`;
const CanvasCol = styled.div`
  flex: 1;
  min-width: 0;
  display: flex;
  flex-direction: column;
`;
const Surface = styled.div`
  flex: 1;
  background: #fff;
`;
const Clip = styled.div`
  height: 11px;
  flex: none;
  overflow: hidden;
`;

function Canvas() {
  return (
    <Center>
      <TabBar>
        <DocTab>index<I w={7} h={7}><path d="M.5.5l6 6M6.500.5l-6 6" stroke="#aaa" strokeWidth="1.800" /></I></DocTab>
      </TabBar>
      <HRuler>{Array.from({ length: 14 }, (_, i) => <span key={i}>{i * 100}</span>)}</HRuler>
      <CanvasRow>
        <VRuler>{Array.from({ length: 9 }, (_, i) => <div key={i}><span>{i * 100}</span></div>)}</VRuler>
        <CanvasCol>
          <CanvasRow><Surface /><Scrollbar at={0} size={33} /></CanvasRow>
          <Clip>
            <Bar $horizontal>
              <BarArrow $turn={-90} />
              <Thumb $horizontal $h={88} $at={0} />
              <Grow />
              <BarArrow $turn={90} />
            </Bar>
          </Clip>
        </CanvasCol>
      </CanvasRow>
    </Center>
  );
}

/* ---------- dialog ---------- */

const Overlay = styled.div`
  position: fixed;
  inset: 0;
  display: grid;
  place-items: center;
  z-index: 2;
`;
const DialogBox = styled.section`
  width: 872px;
  background: ${C.panel};
  border: 1px solid #6b6b6b;
  box-shadow: 0 2px 14px rgba(0, 0, 0, 0.4);
`;
const DialogTitle = styled.div`
  height: 30px;
  display: flex;
  align-items: center;
  gap: 5px;
  padding: 0 10px 2px 8px;
  background: #fff;
  font: 12px "Noto Sans", "Noto Sans CJK SC", sans-serif;
  color: #000;
  button { margin-left: auto; }
`;
const DialogBody = styled.div`
  padding: 10px 10px 6px;
`;
const CaseRow = styled(Row)`
  font-size: 12px;
  label { width: 54px; }
`;
const TextInput = styled.input`
  width: ${(p) => p.$w || "100%"};
  height: ${(p) => p.$h || 22}px;
  padding: 0 3px;
  border: 1px solid ${C.line};
  background: ${(p) => (p.disabled ? C.panel : "#fff")};
  color: ${(p) => (p.disabled ? "#888" : "#000")};
  opacity: 1;
  &::placeholder { font-style: italic; color: #888; opacity: 1; }
`;
const FlatButton = styled.button`
  width: 73px;
  height: 22px;
  margin-left: 15px;
  padding-bottom: 2px;
  border: 1px solid ${C.line};
  color: #000;
`;
const Columns = styled.div`
  display: grid;
  grid-template-columns: 220px 271px minmax(0, 1fr);
  column-gap: 10px;
  margin-top: 11px;
`;
const ColTitle = styled.div`
  height: 20px;
  margin-bottom: 5px;
  line-height: 20px;
  font-size: 12px;
`;
const Panel = styled.div`
  height: 437px;
  display: flex;
  overflow: hidden;
  border: 1px solid ${C.line};
  background: #fff;
  ul { flex: 1; min-width: 0; }
`;
const Hollow = styled.i`
  width: 7px;
  flex: none;
  visibility: ${(p) => (p.$show ? "visible" : "hidden")};
`;
const CaseLine = styled.span`
  display: flex;
  align-items: center;
  gap: 10px;
`;
const Green = styled.span`
  color: #00870a;
`;
const Config = styled.div`
  flex: 1;
  min-width: 0;
  padding: 4px 6px 0 4px;
`;
const ConfigRow = styled(Row)`
  height: ${(p) => p.$h || 22}px;
  margin: ${(p) => p.$t || 0}px 8px 0 ${(p) => p.$in || 0}px;
  gap: ${(p) => p.$gap || 5}px;
  font-size: 12px;
  white-space: nowrap;
  color: ${(p) => (p.$off ? "#777" : "#000")};
`;
const PageList = styled.div`
  height: 116px;
  margin: 7px 8px 0 20px;
  display: flex;
  overflow: hidden;
  border: 1px solid ${C.line};
  ul { margin-top: -1px; }
`;
const LinkRow = styled(ConfigRow)`
  margin-right: 0;
  label { flex: none; }
`;
const Fx = styled.b`
  font-size: 14px;
  color: #ddd;
`;
const Fieldset = styled.fieldset`
  margin: 12px 0 0 2px;
  padding: 4px 7px 7px;
  border: 1px solid ${C.line};
  font-size: 12px;
  legend { padding: 0 4px; margin-left: -4px; line-height: 16px; }
`;
const Options = styled.div`
  display: grid;
  grid-template-columns: 120px 120px;
  grid-auto-rows: 21px;
  padding: 0 0 7px 3px;
  label { display: flex; align-items: center; gap: 7px; padding-bottom: 1px; color: #000; }
`;
const Sizes = styled.div`
  display: grid;
  grid-template-columns: 18px 35px 28px 30px 35px auto;
  row-gap: 5px;
  align-items: center;
  span { font-size: 11px; padding-left: 6px; }
`;
const Actions = styled.div`
  display: flex;
  justify-content: flex-end;
  gap: 5px;
  margin-top: 10px;
`;
const PushButton = styled.button`
  width: 75px;
  height: 23px;
  padding-bottom: 2px;
  border-radius: 3px;
  border: 1px solid ${(p) => (p.$primary ? "#2a8cb4" : "#777")};
  box-shadow: inset 0 0 0 1px ${(p) => (p.$primary ? "#3fc8f4" : "#fafafa")};
  background: ${(p) => (p.$primary
    ? "linear-gradient(#eef4f7, #e0ecf2 48%, #c3d9e4 52%, #cfe2ec)"
    : "linear-gradient(#f3f3f3, #ebebeb 48%, #dcdcdc 52%, #cfcfcf)")};
  font-size: 12px;
  color: #000;
`;

const actions = [
  ["链接", 0], ["打开链接", 1, 1], ["关闭窗口", 1], ["在框架中打开链接", 1, 1], ["滚动到元件<锚链接>", 1], ["设置自适应视图", 1],
  ["元件", 0], ["显示/隐藏", 1, 1], ["设置面板状态", 1], ["设置文本", 1], ["设置图片", 1], ["设置选中", 1, 1], ["设置列表选中项", 1],
  ["启用/禁用", 1, 1], ["移动", 1], ["旋转", 1], ["设置尺寸", 1], ["置于顶层/底层", 1, 1], ["Set Opacity", 1], ["获取焦点", 1], ["展开/折叠树节点", 1, 1],
];
const options = ["工具栏", "菜单栏", "滚动条", "目录", "位置栏", "可调整尺寸", "状态栏", "屏幕正中"];

function Dialog() {
  return (
    <Overlay>
      <DialogBox role="dialog" aria-label="用例编辑">
        <DialogTitle>
          <Logo />用例编辑&lt;鼠标单击时&gt;
          <button aria-label="关闭"><I w={10} h={10}><path d="M.5.5l9 9M9.500.5l-9 9" stroke="#000" strokeWidth="1.200" /></I></button>
        </DialogTitle>
        <DialogBody>
          <CaseRow>
            <label htmlFor="case">用例名称</label>
            <TextInput id="case" $w="300px" defaultValue="Case 1" />
            <FlatButton>添加条件</FlatButton>
          </CaseRow>
          <Columns>
            <div>
              <ColTitle>添加动作</ColTitle>
              <Panel>
                <ul>
                  {actions.map(([t, depth, more]) => (
                    <Item key={t} $in={depth ? 27 : 7} $gap={depth ? 8 : 10}>
                      {depth ? (
                        <Hollow $show={more}><I w={6} h={10}><path d="M.6 1v8l4.600-4z" stroke="#a5a5a5" /></I></Hollow>
                      ) : <Twist />}
                      {t}
                    </Item>
                  ))}
                </ul>
                <Scrollbar at={0} size={291} />
              </Panel>
            </div>
            <div>
              <ColTitle>组织动作</ColTitle>
              <Panel>
                <ul>
                  <Item $in={7} $gap={6}>
                    <Twist />
                    <CaseLine>
                      <I w={12} h={11}>
                        <path d="M2 0h8v4H2z" fill={C.green} />
                        <path d="M6 4v2M1.500 8V6.500h9V8" stroke="#777" />
                        <path d="M0 8h3v3H0zM9 8h3v3H9z" fill={C.blue} />
                      </I>
                      Case 1
                    </CaseLine>
                  </Item>
                  <Item $in={40} $on $gap={8}>
                    <I w={12} h={16}><path d="M2 0h10L8 5h4L3 16l1.500-7H0z" fill="#555" /></I>
                    <span>在 <Green>弹出窗口</Green> 打开 <Green>New Page 2</Green></span>
                  </Item>
                </ul>
              </Panel>
            </div>
            <div>
              <ColTitle>配置动作</ColTitle>
              <Panel>
                <Config>
                  <ConfigRow $gap={6}>打开位置<Select label="打开位置" value="弹出窗口" $h={22} $size={12} $pad={7} $bg={C.panel} $border={C.blue} /></ConfigRow>
                  <ConfigRow $t={3} $in={5}><Radio name="target" id="page" defaultChecked /><label htmlFor="page">链接到当前项目的某个页面</label></ConfigRow>
                  <ConfigRow $t={5} $in={20} $h={19}><TextInput $h={19} placeholder="查找" aria-label="查找" /></ConfigRow>
                  <PageList>
                    <ul>
                      <Item $in={7}><Twist $r={2} /><PageIcon />index</Item>
                      <Item $in={42}><PageIcon />page1</Item>
                      <Item $in={42}><PageIcon />page2</Item>
                      <Item $in={42}><PageIcon />page3</Item>
                      <Item $in={24} $on><PageIcon />New Page 2</Item>
                    </ul>
                    <Scrollbar at={13} size={66} />
                  </PageList>
                  <ConfigRow $t={8} $in={5}><Radio name="target" id="url" /><label htmlFor="url">链接到 url 或文件&lt;例如：D:\趣达.avi&gt;</label></ConfigRow>
                  <LinkRow $t={4} $in={20} $off>
                    <label htmlFor="href">超链接</label>
                    <TextInput id="href" $w="240px" disabled defaultValue="New Page 2.html" />
                    <Fx>fx</Fx>
                  </LinkRow>
                  <Fieldset>
                    <legend>弹出属性</legend>
                    <Options>
                      {options.map((o, i) => <label key={o}><Check defaultChecked={i === 7} />{o}</label>)}
                    </Options>
                    <Sizes>
                      <label htmlFor="l">左</label><NumInput id="l" $w={35} $h={19} defaultValue="100" /><span>px</span>
                      <label htmlFor="t">顶部</label><NumInput id="t" $w={35} $h={19} defaultValue="100" /><span>px</span>
                      <label htmlFor="w">宽</label><NumInput id="w" $w={35} $h={19} defaultValue="500" /><span>px</span>
                      <label htmlFor="h">高</label><NumInput id="h" $w={35} $h={19} defaultValue="500" /><span>px</span>
                    </Sizes>
                  </Fieldset>
                </Config>
              </Panel>
            </div>
          </Columns>
          <Actions><PushButton $primary>确定</PushButton><PushButton>取消</PushButton></Actions>
        </DialogBody>
      </DialogBox>
    </Overlay>
  );
}

/* ---------- floating pieces ---------- */

const ImeBar = styled.div`
  position: fixed;
  left: 778px;
  bottom: -6px;
  z-index: 3;
  width: 226px;
  height: 26px;
  display: flex;
  align-items: center;
  gap: 9px;
  padding: 0 0 3px 37px;
  border: solid #a9c3e0;
  border-width: 1px 1px 0 0;
  background: linear-gradient(90deg, transparent 26px, #fff 26px);
  color: #0a6fd8;
  font-size: 15px;
  font-weight: bold;
  & > svg:first-child { position: absolute; left: 0; top: -5px; }
  & > span { width: 18px; line-height: 18px; }
`;
const Mark = styled.div`
  position: fixed;
  right: 11px;
  bottom: 9px;
  z-index: 3;
  display: flex;
  align-items: center;
  gap: 4px;
  line-height: 22px;
  b { display: block; font-size: 21px; color: #5f9bd3; font-weight: 700; }
  span { display: block; font-size: 17px; line-height: 18px; color: #63bd84; }
`;
const Notes = styled.svg`
  position: fixed;
  inset: 0;
  width: 100vw;
  height: 100vh;
  z-index: 4;
  pointer-events: none;
  g { filter: drop-shadow(2px 3px 2px rgba(0, 0, 0, 0.5)); }
`;

const arrows = [
  [773, 481, 634, 360],
  [1465, 402, 1317, 341],
  [1455, 537, 1209, 500],
  [1466, 711, 1291, 777],
  [1496, 211, 1680, 211],
  [1534, 277, 1668, 297],
];
function Arrow({ pts: [x1, y1, x2, y2] }) {
  const len = Math.hypot(x2 - x1, y2 - y1);
  const deg = (Math.atan2(y2 - y1, x2 - x1) * 180) / Math.PI;
  return (
    <g>
      <path
        transform={`translate(${x2} ${y2}) rotate(${deg})`}
        d={`M0 0L-27 -7L-25 -1.500H${-len}V1.500H-25L-27 7Z`}
        fill="#f00"
        stroke="#f00"
        strokeLinejoin="round"
        strokeWidth=".5"
      />
    </g>
  );
}

export default function App() {
  return (
    <Page>
      <Global />
      <TitleBar>
        <Logo />未命名 - Axure RP 8 Enterprise Edition : 未授权
        <WinButtons>
          <button aria-label="最小化"><I w={10} h={10}><path d="M0 5.500h10" stroke="#888" /></I></button>
          <button aria-label="还原"><I w={10} h={10}><path d="M.5 2.500h7v7h-7zM2.500 2V.5h7v7H8" stroke="#888" /></I></button>
          <button aria-label="关闭"><I w={10} h={10}><path d="M.5.5l9 9M9.500.5l-9 9" stroke="#888" /></I></button>
        </WinButtons>
      </TitleBar>
      <Menu>
        {["文件(F)", "编辑(E)", "视图(V)", "项目(P)", "布局(A)", "发布(I)", "团队(T)", "账号(A)", "帮助(H)"].map((m) => <button key={m}>{m}</button>)}
      </Menu>
      <Toolbar />
      <FormatBar />
      <Main><LeftPanel /><Canvas /><RightPanel /></Main>
      <Dialog />
      <ImeBar>
        <I w={32} h={32}>
          <path d="M3 5Q3 3 5 3L24 0q2 0 2.500 2L31 26q0 3-2 3.500L9 33q-3 0-3-2L1 9z" fill="#f15a24" />
          <path d="M23 8c-5-2-13-1-13 3 0 5 13 3 13 8 0 4-7 5-13 3" stroke="#fff" strokeWidth="3.500" />
        </I>
        <span>英</span>
        <I w={13} h={14}><circle cx="2.500" cy="4" r="1.800" fill="#0a6fd8" /><path d="M9 8h3c.5 3-1 5-3 6z" fill="#0a6fd8" /></I>
        <FaMicrophone size={14} />
        <I w={15} h={13}><path d="M1 1h13v11H1zM3 4h9M3 6.500h9M4 9.500h7M5.500 3v4M9.500 3v4" stroke="#0a6fd8" strokeWidth="1.400" /></I>
        <FaTshirt size={16} />
        <I w={16} h={14}><circle cx="8" cy="8" r="5.500" fill="#0a6fd8" /><path d="M8 3V0M1 6v4M15 6v4" stroke="#0a6fd8" strokeWidth="2" /><circle cx="6" cy="8" r="1.200" fill="#fff" /><circle cx="10" cy="8" r="1.200" fill="#fff" /></I>
        <I w={14} h={14}><g fill="#0a6fd8"><rect width="6" height="6" rx="1.500" /><rect x="8" width="6" height="6" rx="3" /><rect y="8" width="6" height="6" rx="1.500" /><rect x="8" y="8" width="6" height="6" rx="1.500" /></g></I>
        <I w={14} h={14}><circle cx="7" cy="7" r="4.500" stroke="#0a6fd8" strokeWidth="2" /><path d="M7 0v3M7 7v7M1 3.500l3 1.500M13 3.500L10 5M1 10.500L4 9M13 10.500L10 9" stroke="#0a6fd8" strokeWidth="2" /></I>
      </ImeBar>
      <Mark>
        <I w={38} h={42}>
          <path d="M38 0C18 2 2 12 0 29c1 4 4 6 8 7-4-9 2-24 30-36z" fill="#4a93cf" />
          <path d="M8 31c2-10 12-16 20-12 6 3 6 14-2 19-6 4-15 4-22 3 10-1 19-5 20-12 0-6-9-6-16 2z" fill="#7cc47f" />
          <path d="M38 0C28 6 18 12 14 22c4-4 9-6 13-5 3-6 7-12 11-17z" fill="#f2cf63" opacity=".75" />
        </I>
        <div><b>极光下载站</b><span>www.xz7.com</span></div>
      </Mark>
      <Notes aria-hidden="true">
        {arrows.map((a) => <Arrow key={a.join()} pts={a} />)}
        <path d="M1265.500 470.500v16l3.700-3.500 2.800 6 2.500-1-2.700-6h5.200z" fill="#fff" stroke="#223" />
      </Notes>
    </Page>
  );
}
